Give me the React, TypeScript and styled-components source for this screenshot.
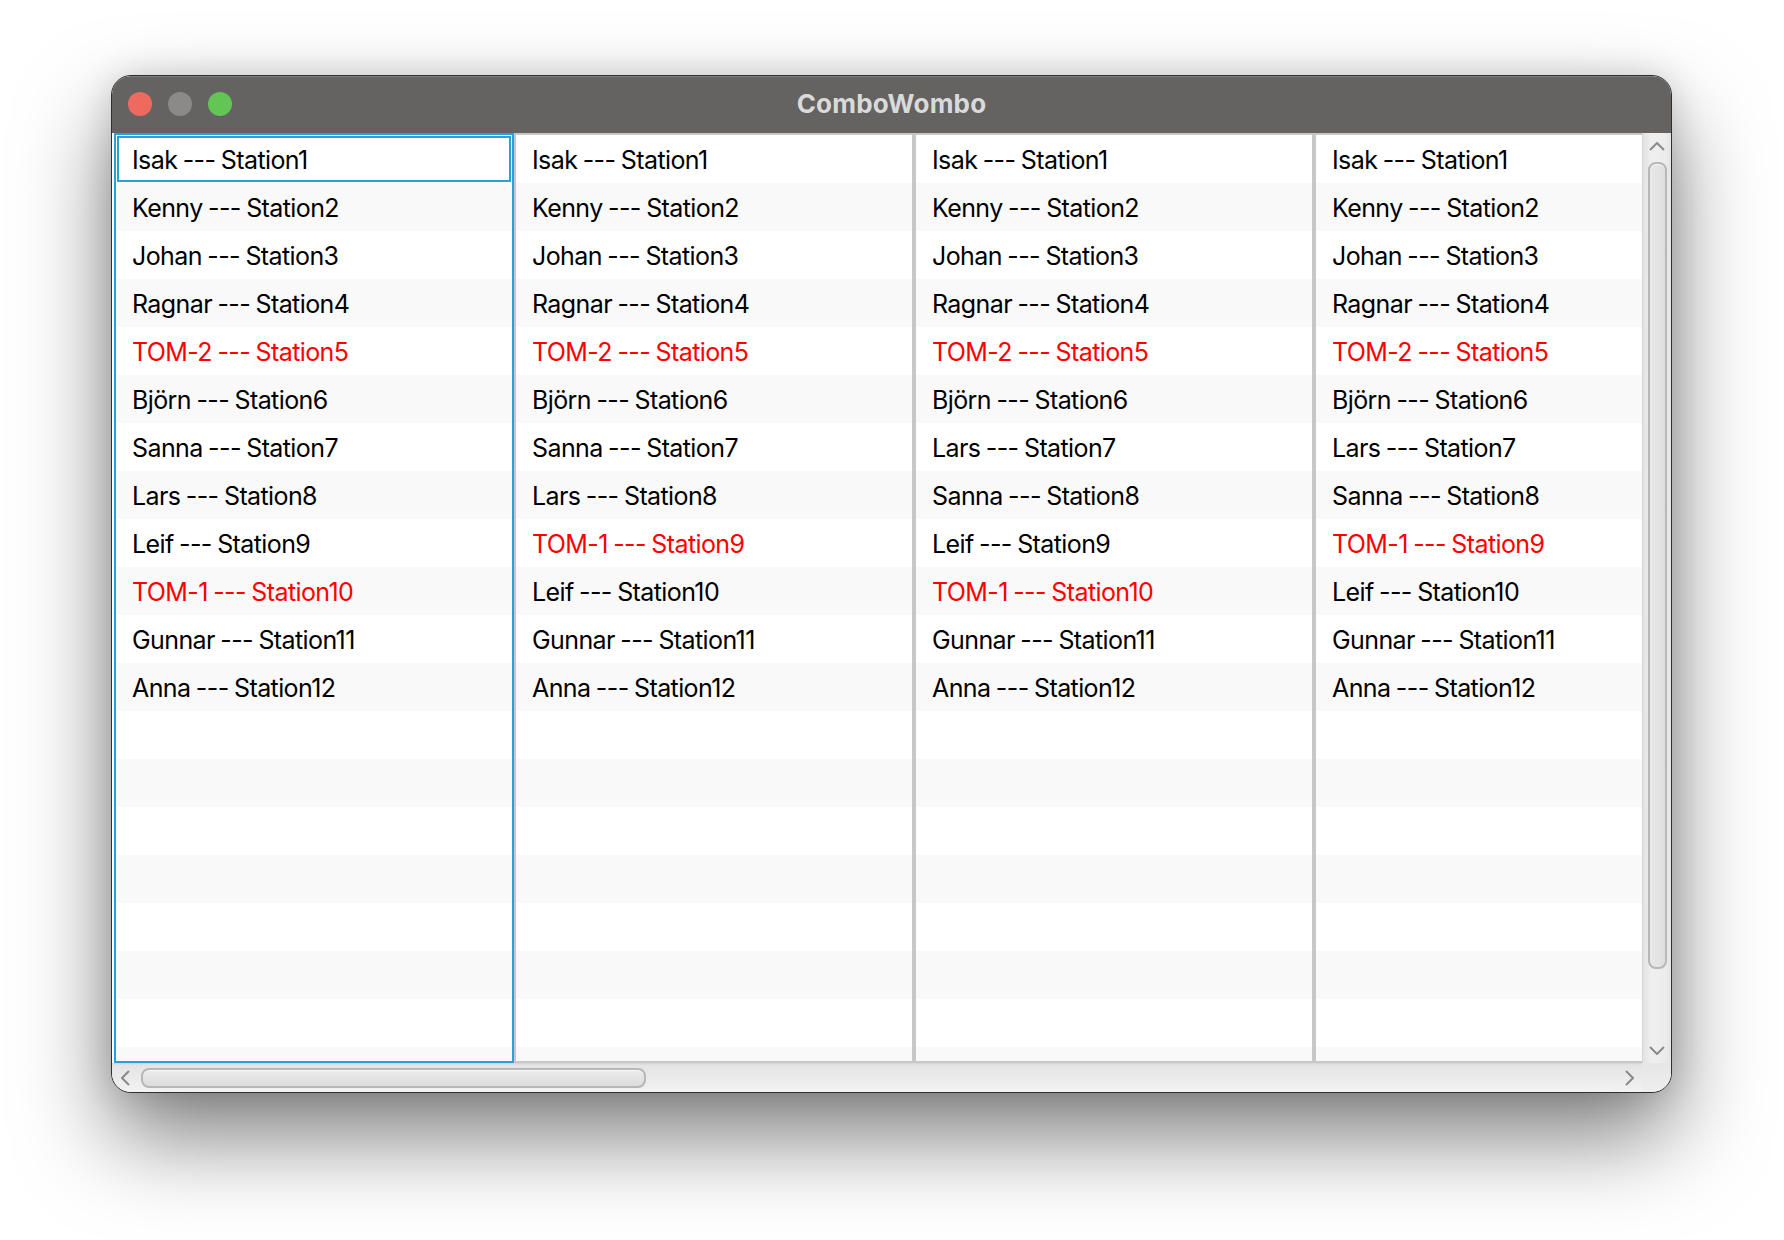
import React from "react";
import styled, { createGlobalStyle } from "styled-components";

const GlobalStyle = createGlobalStyle`
  html, body { margin: 0; padding: 0; background: #ffffff; }
  body { font-family: Inter, "Noto Sans", "Liberation Sans", sans-serif; }
  * { box-sizing: border-box; }
`;

const Page = styled.div`
  width: 1784px;
  height: 1240px;
  padding: 75px 0 0 111px;
  background: #ffffff;
  overflow: hidden;
`;

const Window = styled.div`
  width: 1561px;
  height: 1018px;
  display: flex;
  flex-direction: column;
  border: 1px solid #2f2f2f;
  border-radius: 20px;
  overflow: hidden;
  background: #ececec;
  box-shadow: 0 44px 90px rgba(0, 0, 0, 0.5), 0 0 34px rgba(0, 0, 0, 0.14);
`;

const TitleBar = styled.div`
  position: relative;
  height: 57px;
  flex-shrink: 0;
  display: flex;
  align-items: center;
  justify-content: center;
  padding-bottom: 3px;
  background: #646361;
  box-shadow: inset 0 1px 0 rgba(255, 255, 255, 0.18);
`;

const Lights = styled.div`
  position: absolute;
  left: 16px;
  top: 0;
  bottom: 2px;
  display: flex;
  align-items: center;
  gap: 16px;
`;

const Light = styled.span<{ $color: string }>`
  width: 24px;
  height: 24px;
  border-radius: 50%;
  background: ${(p) => p.$color};
`;

const Title = styled.div`
  font-family: Inter, "Noto Sans", sans-serif;
  font-weight: 700;
  font-size: 26px;
  color: #dadada;
  letter-spacing: 0.2px;
`;

const ScrollArea = styled.div`
  flex: 1;
  display: grid;
  grid-template-columns: 1fr 29px;
  grid-template-rows: 1fr 29px;
  min-height: 0;
`;

const Viewport = styled.div`
  overflow: hidden;
  background: #ffffff;
  min-width: 0;
  min-height: 0;
`;

const ListRow = styled.div`
  display: flex;
  height: 100%;
  padding-left: 2px;
`;

const List = styled.div<{ $focused?: boolean }>`
  width: 400px;
  flex-shrink: 0;
  height: 100%;
  overflow: hidden;
  border: 2px solid ${(p) => (p.$focused ? "#27a2d9" : "#c7c7c7")};
  background: #ffffff;
`;

const Cell = styled.div<{ $alt: boolean; $red?: boolean; $focus?: boolean }>`
  height: 48px;
  display: flex;
  align-items: center;
  padding: 2px 0 0 16px;
  font-family: Inter, "Noto Sans", sans-serif;
  font-size: 25px;
  letter-spacing: -0.6px;
  word-spacing: -1px;
  white-space: nowrap;
  color: ${(p) => (p.$red ? "#ff0000" : "#000000")};
  background: ${(p) => (p.$alt ? "#f9f9f9" : "#ffffff")};
  box-shadow: ${(p) =>
    p.$focus ? "inset 0 0 0 1px #ffffff, inset 0 0 0 3px #27a2d9" : "none"};
`;

const VScroll = styled.div`
  display: flex;
  flex-direction: column;
  background: linear-gradient(to right, #e2e2e2, #efefef 30%, #ececec 80%, #e4e4e4);
  border-left: 1px solid #d6d6d6;
`;

const HScroll = styled.div`
  display: flex;
  background: linear-gradient(to bottom, #d2d2d2 0, #e4e4e4 2px, #ececec 60%, #f3f3f3);
`;

const Corner = styled.div`
  background: linear-gradient(to bottom, #e6e6e6, #eeeeee);
`;

const ArrowButton = styled.div<{ $vertical?: boolean }>`
  flex-shrink: 0;
  width: ${(p) => (p.$vertical ? "100%" : "26px")};
  height: ${(p) => (p.$vertical ? "26px" : "100%")};
  display: flex;
  align-items: center;
  justify-content: center;
`;

const Track = styled.div<{ $vertical?: boolean }>`
  flex: 1;
  display: flex;
  flex-direction: ${(p) => (p.$vertical ? "column" : "row")};
  align-items: center;
  padding: ${(p) => (p.$vertical ? "3px 0" : "0 3px")};
  min-width: 0;
  min-height: 0;
`;

const Thumb = styled.div<{ $vertical?: boolean }>`
  flex-shrink: 0;
  width: ${(p) => (p.$vertical ? "19px" : "auto")};
  height: ${(p) => (p.$vertical ? "auto" : "20px")};
  border: 2px solid #b7b7b7;
  border-radius: 8px;
  background: ${(p) =>
    p.$vertical
      ? "linear-gradient(to right, #e9e9e9, #dedede)"
      : "linear-gradient(to bottom, #ececec, #dcdcdc)"};
  box-shadow: inset 0 1px 0 rgba(255, 255, 255, 0.7);
`;

const Chevron: React.FC<{ dir: "up" | "down" | "left" | "right" }> = ({ dir }) => {
  const pts: Record<string, string> = {
    up: "1,8 8,1 15,8",
    down: "1,1 8,8 15,1",
    left: "8,1 1,8 8,15",
    right: "1,1 8,8 1,15",
  };
  const vertical = dir === "up" || dir === "down";
  return (
    <svg
      width={vertical ? 16 : 9}
      height={vertical ? 9 : 16}
      viewBox={vertical ? "0 0 16 9" : "0 0 9 16"}
    >
      <polyline
        points={pts[dir]}
        fill="none"
        stroke="#8a8a8a"
        strokeWidth="2"
        strokeLinejoin="miter"
      />
    </svg>
  );
};

type Entry = { name: string; station: number; red?: boolean };

const make = (names: string[]): Entry[] =>
  names.map((n, i) => ({ name: n, station: i + 1, red: n.startsWith("TOM") }));

const lists: Entry[][] = [
  make(["Isak", "Kenny", "Johan", "Ragnar", "TOM-2", "Björn", "Sanna", "Lars", "Leif", "TOM-1", "Gunnar", "Anna"]),
  make(["Isak", "Kenny", "Johan", "Ragnar", "TOM-2", "Björn", "Sanna", "Lars", "TOM-1", "Leif", "Gunnar", "Anna"]),
  make(["Isak", "Kenny", "Johan", "Ragnar", "TOM-2", "Björn", "Lars", "Sanna", "Leif", "TOM-1", "Gunnar", "Anna"]),
  make(["Isak", "Kenny", "Johan", "Ragnar", "TOM-2", "Björn", "Lars", "Sanna", "TOM-1", "Leif", "Gunnar", "Anna"]),
];

const TOTAL_ROWS = 20;

const ListView: React.FC<{ items: Entry[]; focused?: boolean }> = ({ items, focused }) => (
  <List $focused={focused}>
    {Array.from({ length: TOTAL_ROWS }).map((_, i) => {
      const it = items[i];
      return (
        <Cell key={i} $alt={i % 2 === 1} $red={it?.red} $focus={focused && i === 0}>
          {it ? `${it.name} --- Station${it.station}` : ""}
        </Cell>
      );
    })}
  </List>
);

export default function App() {
  return (
    <>
      <GlobalStyle />
      <Page>
        <Window>
          <TitleBar>
            <Lights>
              <Light $color="#ee6a5f" />
              <Light $color="#8b8a89" />
              <Light $color="#62c554" />
            </Lights>
            <Title>ComboWombo</Title>
          </TitleBar>
          <ScrollArea>
            <Viewport>
              <ListRow>
                {lists.map((l, i) => (
                  <ListView key={i} items={l} focused={i === 0} />
                ))}
              </ListRow>
            </Viewport>
            <VScroll>
              <ArrowButton $vertical>
                <Chevron dir="up" />
              </ArrowButton>
              <Track $vertical>
                <Thumb $vertical style={{ height: 807 }} />
              </Track>
              <ArrowButton $vertical>
                <Chevron dir="down" />
              </ArrowButton>
            </VScroll>
            <HScroll>
              <ArrowButton>
                <Chevron dir="left" />
              </ArrowButton>
              <Track>
                <Thumb style={{ width: 505 }} />
              </Track>
              <ArrowButton>
                <Chevron dir="right" />
              </ArrowButton>
            </HScroll>
            <Corner />
          </ScrollArea>
        </Window>
      </Page>
    </>
  );
}
